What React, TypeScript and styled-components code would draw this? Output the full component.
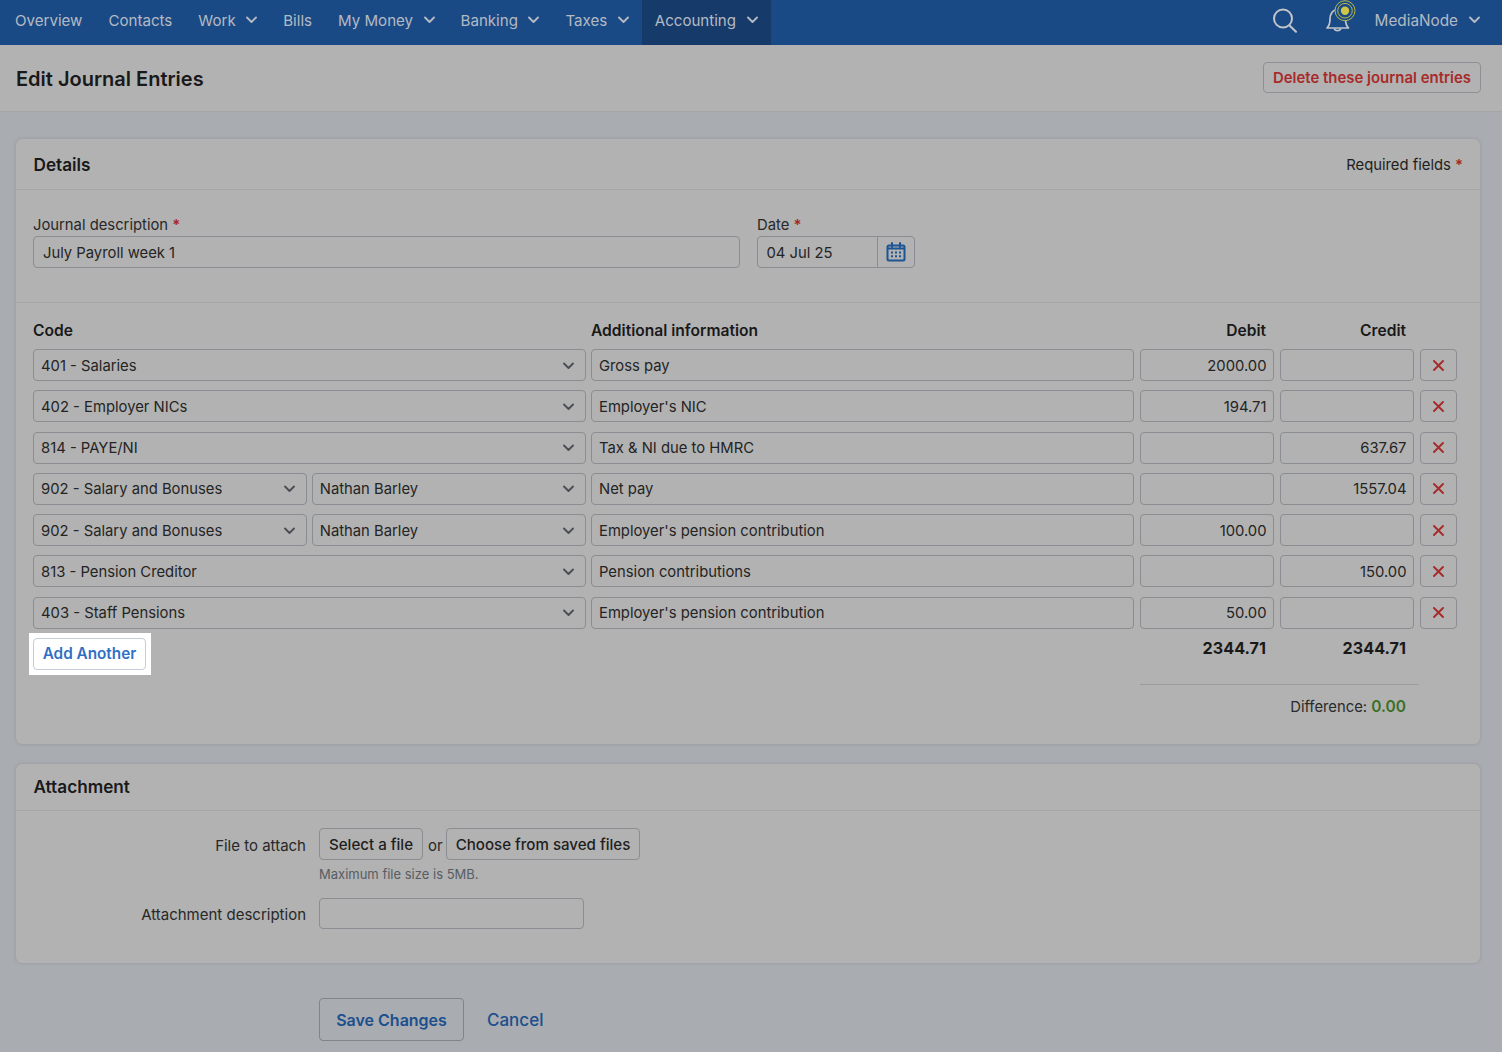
import React from 'react';
import styled, { createGlobalStyle } from 'styled-components';

const GlobalStyle = createGlobalStyle`
    html, body {
        margin: 0;
        background: #a9acb1;
    }
    body {
        font-family: "Inter", "Liberation Sans", sans-serif;
        font-size: 14.8px;
        color: #1e1e1e;
        overflow: hidden;
    }
    * {
        box-sizing: border-box;
    }
`;

const Page = styled.div`
    width: 1502px;
    height: 1052px;
    overflow: hidden;
`;

const NavBar = styled.nav`
    display: flex;
    align-items: stretch;
    justify-content: space-between;
    height: 45px;
    padding-left: 2px;
    background: #1a4a85;
    color: #b4bac3;
`;

const NavList = styled.div`
    display: flex;
    align-items: stretch;
`;

const NavItem = styled.div<{ $active?: boolean }>`
    display: flex;
    align-items: center;
    gap: 10.5px;
    padding: 0 13px 5px;
    font-size: 15.1px;
    background: ${props => (props.$active ? '#163b6b' : 'transparent')};
`;

const NavRight = styled.div`
    display: flex;
    align-items: center;
    padding: 0 22px 5px 0;
`;

const UserName = styled.span`
    display: flex;
    align-items: center;
    gap: 11px;
    margin-left: 18px;
    font-size: 15.3px;
`;

const BellWrap = styled.span`
    display: block;
    align-self: flex-start;
    margin-left: 27px;
    height: 32px;
`;

const TitleBar = styled.header`
    display: flex;
    align-items: center;
    justify-content: space-between;
    height: 67px;
    padding: 0 21px 2px 16px;
    background: #b2b2b2;
    border-bottom: 1px solid #a5a5a5;
`;

const PageTitle = styled.h1`
    margin: 0;
    padding-top: 4px;
    font-size: 20px;
    font-weight: 600;
    color: #191919;
`;

const DangerButton = styled.button`
    height: 31px;
    padding: 1px 9px 0;
    border: 1px solid #8d9095;
    border-radius: 4px;
    background: transparent;
    font: 600 14.95px "Inter", sans-serif;
    color: #a82a2a;
`;

const Content = styled.main`
    display: flex;
    flex-direction: column;
    padding: 27px 22px 0 16px;
`;

const Card = styled.section`
    background: #b2b2b2;
    border-radius: 6px;
    box-shadow: 0 0 3px rgba(120, 124, 130, 0.5);
`;

const DetailsCard = styled(Card)`
    height: 605px;
`;

const AttachmentCard = styled(Card)`
    height: 199px;
    margin-top: 20px;
`;

const CardHead = styled.div<{ $height: number }>`
    display: flex;
    align-items: center;
    justify-content: space-between;
    height: ${props => props.$height}px;
    padding: 0 17px;
    border-bottom: 1px solid #a6a6a6;
`;

const AttachmentHead = styled(CardHead)`
    padding-bottom: 2px;
`;

const CardTitle = styled.h2`
    margin: 0 0 0 0.5px;
    font-size: 17.2px;
    font-weight: 600;
    color: #191919;
`;

const RequiredNote = styled.span`
    padding-top: 1px;
`;

const Star = styled.span`
    color: #a82222;
    font-weight: 600;
`;

const DescriptionRow = styled.div`
    display: flex;
    gap: 17px;
    height: 113px;
    padding: 26px 17px 0;
    border-bottom: 1px solid #a6a6a6;
`;

const Field = styled.label<{ $width: number }>`
    display: flex;
    flex-direction: column;
    width: ${props => props.$width}px;
`;

const FieldLabel = styled.span`
    height: 20px;
    line-height: 18px;
    color: #282828;
`;

const Input = styled.div<{ $align?: string }>`
    display: flex;
    align-items: center;
    justify-content: ${props => (props.$align === 'right' ? 'flex-end' : 'flex-start')};
    height: 32px;
    padding: 1px 6.5px 0 7px;
    border: 1px solid #8a8d91;
    border-radius: 4px;
    color: #242424;
    white-space: nowrap;
`;

const WideInput = styled(Input)`
    padding: 1px 9px 0;
`;

const DateBox = styled.div`
    display: flex;
    height: 32px;
    border: 1px solid #8a8d91;
    border-radius: 4px;
`;

const DateValue = styled.span`
    display: flex;
    flex: 1;
    align-items: center;
    padding: 1px 0 0 8.5px;
    color: #242424;
`;

const DateIcon = styled.span`
    display: flex;
    align-items: center;
    justify-content: center;
    width: 37px;
    border-left: 1px solid #8a8d91;
`;

const Ledger = styled.div`
    padding: 0 23px 0 17px;
`;

const LedgerGrid = styled.div`
    display: grid;
    grid-template-columns: 552.5px 543px 134.5px 134.5px 37.5px;
    column-gap: 5.5px;
`;

const LedgerHead = styled(LedgerGrid)`
    align-items: center;
    height: 46px;
    padding-top: 9px;
    font-size: 15.6px;
    font-weight: 600;
    color: #191919;
`;

const HeadRight = styled.span`
    padding-right: 8px;
    text-align: right;
`;

const Rows = styled.div`
    display: flex;
    flex-direction: column;
    gap: 9.25px;
`;

const CodeCell = styled.div`
    display: flex;
    gap: 5px;
`;

const SelectBox = styled(Input)`
    flex: 1;
    justify-content: space-between;
    padding-right: 11px;
`;

const RemoveButton = styled.button`
    display: flex;
    align-items: center;
    justify-content: center;
    height: 32px;
    padding: 0;
    border: 1px solid #8a8d91;
    border-radius: 4px;
    background: transparent;
`;

const Totals = styled(LedgerGrid)`
    margin-top: 4px;
`;

const Spotlight = styled.div`
    justify-self: start;
    grid-column: 1 / 3;
    margin-left: -4px;
    padding: 5px 5px 5px 4px;
    background: #ffffff;
`;

const AddButton = styled.button`
    display: block;
    width: 113px;
    height: 32px;
    padding: 0;
    border: 1px solid #c6cdd8;
    border-radius: 4px;
    background: #ffffff;
    font: 600 15.3px "Inter", sans-serif;
    color: #2f70c4;
`;

const TotalValue = styled.span`
    padding: 5px 8px 0 0;
    font-size: 16.2px;
    font-weight: 700;
    text-align: right;
    color: #191919;
`;

const DifferenceBlock = styled.div`
    width: 279px;
    margin: 9px 0 0 1107px;
    padding: 12px 13px 0 0;
    border-top: 1px solid #9c9c9c;
    text-align: right;
    color: #2a2a2a;
`;

const GreenValue = styled.span`
    font-size: 15.5px;
    font-weight: 600;
    color: #3c7026;
`;

const FormRow = styled.div`
    display: grid;
    grid-template-columns: 290px auto;
    column-gap: 13px;
    align-items: start;
`;

const AttachBody = styled.div`
    display: flex;
    flex-direction: column;
    gap: 15px;
    padding-top: 17px;
`;

const RowLabel = styled.span`
    padding-top: 9px;
    font-size: 15px;
    line-height: 18px;
    text-align: right;
    color: #282828;
`;

const ButtonLine = styled.div`
    display: flex;
    align-items: center;
    gap: 5px;
`;

const PlainButton = styled.button`
    height: 32px;
    padding: 0 9px;
    border: 1px solid #8a8d91;
    border-radius: 4px;
    background: transparent;
    font: 500 15.1px "Inter", sans-serif;
    color: #1e1e1e;
`;

const OrText = styled.span`
    margin-right: -2px;
    padding-top: 3px;
    font-size: 15px;
    color: #282828;
`;

const Hint = styled.div`
    margin-top: 6px;
    font-size: 13px;
    line-height: 16px;
    color: #575d63;
`;

const ShortInput = styled(Input)`
    width: 265px;
    height: 31px;
    margin-top: 1px;
`;

const Actions = styled.div`
    display: flex;
    align-items: center;
    gap: 23px;
    margin: 35px 0 0 303px;
`;

const SaveButton = styled.button`
    width: 145px;
    height: 43px;
    padding: 0;
    border: 1px solid #7f858c;
    border-radius: 4px;
    background: transparent;
    font: 600 16px "Inter", sans-serif;
    color: #1c4f8d;
`;

const CancelLink = styled.a`
    font-size: 17px;
    font-weight: 500;
    color: #1c4f8d;
`;

const Chevron: React.FC<{ color?: string }> = ({ color = 'currentColor' }) => (
    <svg width="11" height="8" viewBox="0 0 11 8" fill="none">
        <path d="M1 1.500 5.500 6 10 1.500" stroke={color} strokeWidth="1.900" strokeLinecap="round" strokeLinejoin="round" />
    </svg>
);

const SearchIcon = () => (
    <svg width="25" height="25" viewBox="0 0 25 25" fill="none" stroke="#c2c5ca" strokeWidth="2" strokeLinecap="round">
        <circle cx="10" cy="10.500" r="9" />
        <path d="m16.500 17.500 6.500 6.300" />
    </svg>
);

const BellIcon = () => (
    <svg width="32" height="32" viewBox="0 0 32 32" fill="none">
        <path
            d="M2 28c2.300-2.300 3-4 3-9 0-5.500 3-9.500 7.500-9.500 4.500 0 8 3.500 8 9.500 0 5 .7 6.700 3 9Z"
            stroke="#c2c5ca"
            strokeWidth="1.700"
            strokeLinejoin="round"
        />
        <path d="M9.500 29.300c1 1.700 5 1.700 6 0" stroke="#c2c5ca" strokeWidth="1.700" strokeLinecap="round" />
        <circle cx="20" cy="10.700" r="10" fill="#1a4a85" stroke="#b6b84c" strokeWidth="1" />
        <circle cx="20" cy="10.700" r="7.300" stroke="#b6b84c" strokeWidth="1" />
        <circle cx="20" cy="10.700" r="4.200" fill="#cfc548" />
    </svg>
);

const CalendarIcon = () => (
    <svg width="20" height="20" viewBox="0 0 20 20" fill="none">
        <rect x="1.500" y="3.500" width="17" height="15" rx="1.500" stroke="#1d5496" strokeWidth="2" />
        <path d="M1.500 6.500h17" stroke="#1d5496" strokeWidth="2" />
        <path d="M6 1v4M14 1v4" stroke="#1d5496" strokeWidth="2" strokeLinecap="round" />
        <path
            d="M5 9.500h2v2H5zM9 9.500h2v2H9zM13 9.500h2v2h-2zM5 13.300h2v2H5zM9 13.300h2v2H9zM13 13.300h2v2h-2z"
            fill="#1d5496"
        />
    </svg>
);

const CrossIcon = () => (
    <svg width="11" height="11" viewBox="0 0 11 11" fill="none">
        <path d="M1 1l9 9M10 1 1 10" stroke="#a82a2a" strokeWidth="1.900" strokeLinecap="round" />
    </svg>
);

const navItems = [
    { label: 'Overview' },
    { label: 'Contacts' },
    { label: 'Work', menu: true },
    { label: 'Bills' },
    { label: 'My Money', menu: true },
    { label: 'Banking', menu: true },
    { label: 'Taxes', menu: true },
    { label: 'Accounting', menu: true, active: true },
];

const ledgerRows = [
    { code: '401 - Salaries', info: 'Gross pay', debit: '2000.00', credit: '' },
    { code: '402 - Employer NICs', info: "Employer's NIC", debit: '194.71', credit: '' },
    { code: '814 - PAYE/NI', info: 'Tax & NI due to HMRC', debit: '', credit: '637.67' },
    { code: '902 - Salary and Bonuses', person: 'Nathan Barley', info: 'Net pay', debit: '', credit: '1557.04' },
    { code: '902 - Salary and Bonuses', person: 'Nathan Barley', info: "Employer's pension contribution", debit: '100.00', credit: '' },
    { code: '813 - Pension Creditor', info: 'Pension contributions', debit: '', credit: '150.00' },
    { code: '403 - Staff Pensions', info: "Employer's pension contribution", debit: '50.00', credit: '' },
];

const Select: React.FC<{ value: string }> = ({ value }) => (
    <SelectBox>
        {value}
        <Chevron color="#4b4f55" />
    </SelectBox>
);

export default function App() {
    return (
        <Page>
            <GlobalStyle />
            <NavBar>
                <NavList>
                    {navItems.map(item => (
                        <NavItem key={item.label} $active={item.active}>
                            {item.label}
                            {item.menu && <Chevron />}
                        </NavItem>
                    ))}
                </NavList>
                <NavRight>
                    <SearchIcon />
                    <BellWrap>
                        <BellIcon />
                    </BellWrap>
                    <UserName>
                        MediaNode
                        <Chevron />
                    </UserName>
                </NavRight>
            </NavBar>
            <TitleBar>
                <PageTitle>Edit Journal Entries</PageTitle>
                <DangerButton>Delete these journal entries</DangerButton>
            </TitleBar>
            <Content>
                <DetailsCard>
                    <CardHead $height={51}>
                        <CardTitle>Details</CardTitle>
                        <RequiredNote>
                            Required fields <Star>*</Star>
                        </RequiredNote>
                    </CardHead>
                    <DescriptionRow>
                        <Field $width={707}>
                            <FieldLabel>
                                Journal description <Star>*</Star>
                            </FieldLabel>
                            <WideInput>July Payroll week 1</WideInput>
                        </Field>
                        <Field $width={158}>
                            <FieldLabel>
                                Date <Star>*</Star>
                            </FieldLabel>
                            <DateBox>
                                <DateValue>04 Jul 25</DateValue>
                                <DateIcon>
                                    <CalendarIcon />
                                </DateIcon>
                            </DateBox>
                        </Field>
                    </DescriptionRow>
                    <Ledger>
                        <LedgerHead>
                            <span>Code</span>
                            <span>Additional information</span>
                            <HeadRight>Debit</HeadRight>
                            <HeadRight>Credit</HeadRight>
                        </LedgerHead>
                        <Rows>
                            {ledgerRows.map((row, index) => (
                                <LedgerGrid key={index}>
                                    <CodeCell>
                                        <Select value={row.code} />
                                        {row.person && <Select value={row.person} />}
                                    </CodeCell>
                                    <Input>{row.info}</Input>
                                    <Input $align="right">{row.debit}</Input>
                                    <Input $align="right">{row.credit}</Input>
                                    <RemoveButton>
                                        <CrossIcon />
                                    </RemoveButton>
                                </LedgerGrid>
                            ))}
                        </Rows>
                        <Totals>
                            <Spotlight>
                                <AddButton>Add Another</AddButton>
                            </Spotlight>
                            <TotalValue>2344.71</TotalValue>
                            <TotalValue>2344.71</TotalValue>
                        </Totals>
                        <DifferenceBlock>
                            Difference: <GreenValue>0.00</GreenValue>
                        </DifferenceBlock>
                    </Ledger>
                </DetailsCard>
                <AttachmentCard>
                    <AttachmentHead $height={47}>
                        <CardTitle>Attachment</CardTitle>
                    </AttachmentHead>
                    <AttachBody>
                        <FormRow>
                            <RowLabel>File to attach</RowLabel>
                            <div>
                                <ButtonLine>
                                    <PlainButton>Select a file</PlainButton>
                                    <OrText>or</OrText>
                                    <PlainButton>Choose from saved files</PlainButton>
                                </ButtonLine>
                                <Hint>Maximum file size is 5MB.</Hint>
                            </div>
                        </FormRow>
                        <FormRow>
                            <RowLabel>Attachment description</RowLabel>
                            <ShortInput />
                        </FormRow>
                    </AttachBody>
                </AttachmentCard>
                <Actions>
                    <SaveButton>Save Changes</SaveButton>
                    <CancelLink>Cancel</CancelLink>
                </Actions>
            </Content>
        </Page>
    );
}
